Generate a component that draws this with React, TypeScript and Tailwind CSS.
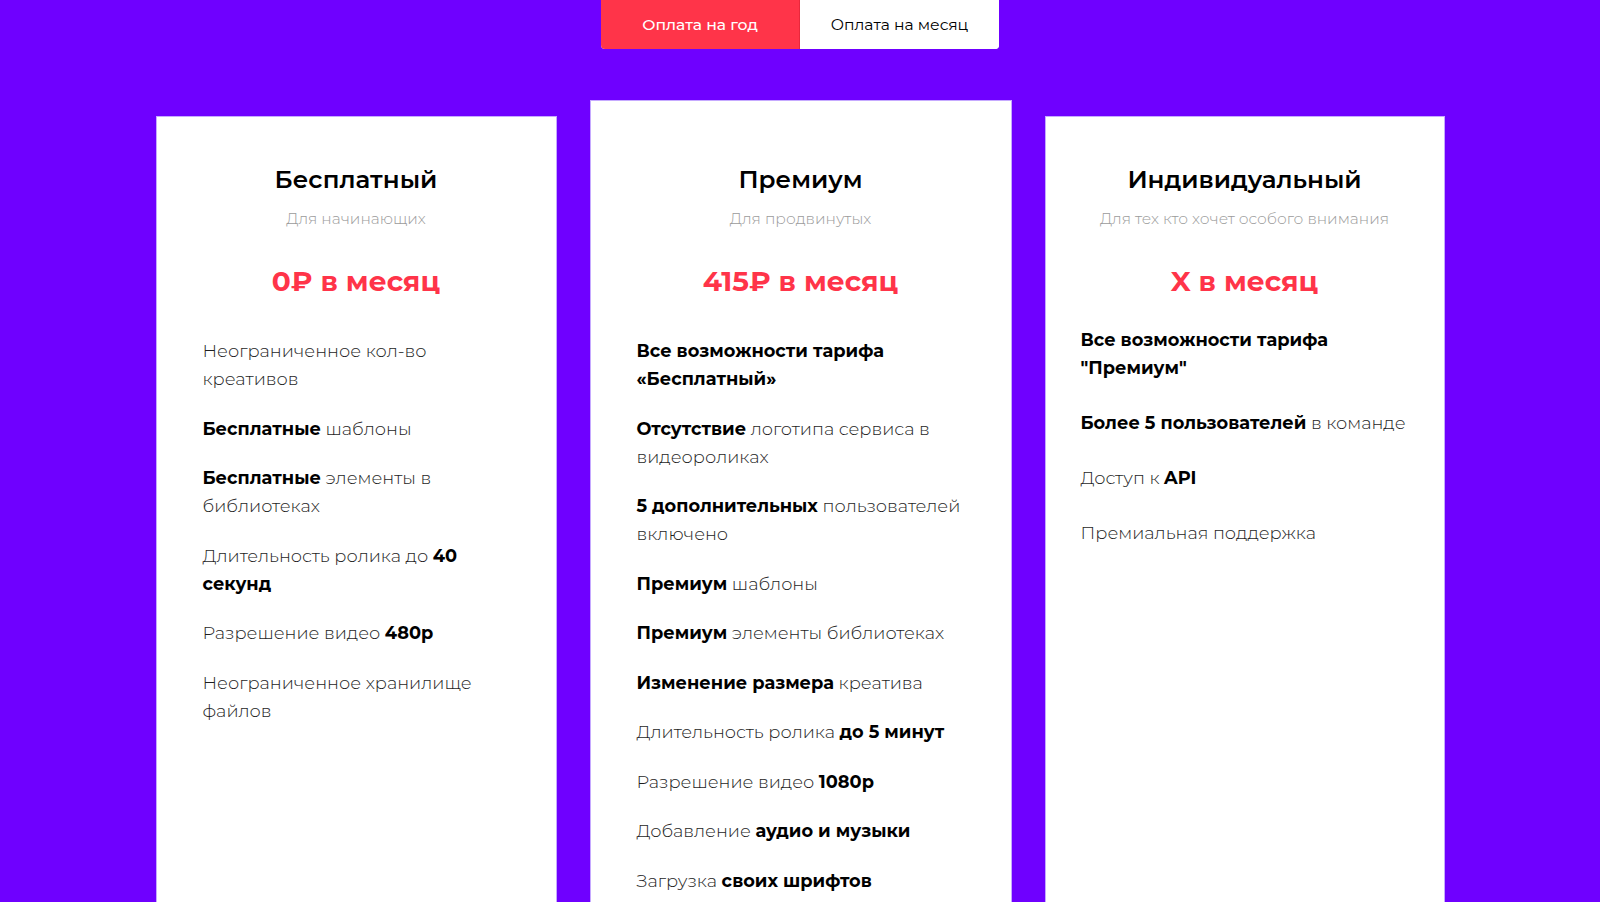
import React, { useState } from "react";

const plans = [
  {
    name: "Бесплатный",
    sub: "Для начинающих",
    price: "0₽ в месяц",
    features: [
      [{ t: "Неограниченное кол-во креативов" }],
      [{ t: "Бесплатные", b: true }, { t: " шаблоны" }],
      [{ t: "Бесплатные", b: true }, { t: " элементы в библиотеках" }],
      [{ t: "Длительность ролика до " }, { t: "40 секунд", b: true }],
      [{ t: "Разрешение видео " }, { t: "480p", b: true }],
      [{ t: "Неограниченное хранилище файлов" }],
    ],
  },
  {
    name: "Премиум",
    sub: "Для продвинутых",
    price: "415₽ в месяц",
    features: [
      [{ t: "Все возможности тарифа «Бесплатный»", b: true }],
      [{ t: "Отсутствие", b: true }, { t: " логотипа сервиса в видеороликах" }],
      [{ t: "5 дополнительных", b: true }, { t: " пользователей включено" }],
      [{ t: "Премиум", b: true }, { t: " шаблоны" }],
      [{ t: "Премиум", b: true }, { t: " элементы библиотеках" }],
      [{ t: "Изменение размера", b: true }, { t: " креатива" }],
      [{ t: "Длительность ролика " }, { t: "до 5 минут", b: true }],
      [{ t: "Разрешение видео " }, { t: "1080p", b: true }],
      [{ t: "Добавление " }, { t: "аудио и музыки", b: true }],
      [{ t: "Загрузка " }, { t: "своих шрифтов", b: true }],
    ],
  },
  {
    name: "Индивидуальный",
    sub: "Для тех кто хочет особого внимания",
    price: "X в месяц",
    features: [
      [{ t: 'Все возможности тарифа "Премиум"', b: true }],
      [{ t: "Более 5 пользователей", b: true }, { t: " в команде" }],
      [{ t: "Доступ к " }, { t: "API", b: true }],
      [{ t: "Премиальная поддержка" }],
    ],
  },
];

const cardStyles = [
  { card: "mt-4 w-[401px] pt-[46px] px-[46px]", list: "mt-[38px] gap-[21.5px]" },
  { card: "w-[422px] pt-[62px] px-[46px]", list: "mt-[38px] gap-[21.5px]" },
  { card: "mt-4 w-[400px] pt-[46px] px-[35px]", list: "mt-[27px] gap-[27px] -mr-[7px]" },
];

const App = () => {
  const [yearly, setYearly] = useState(true);

  return (
    <div
      className="h-screen overflow-hidden bg-[#6f00ff] flex flex-col items-center"
      style={{ fontFamily: '"Montserrat", "Open Sans", "Noto Sans", sans-serif' }}
    >
      {/* Toggle */}
      <div className="shrink-0 flex w-[398px] h-[49px] rounded-b-[4px] overflow-hidden bg-white">
        <button
          onClick={() => setYearly(true)}
          className={`w-1/2 h-full text-[15.6px] font-medium ${
            yearly ? "bg-[#ff3449] text-white border-r border-[#e8283c]" : "bg-white text-black"
          }`}
        >
          Оплата на год
        </button>
        <button
          onClick={() => setYearly(false)}
          className={`w-1/2 h-full text-[15.6px] ${
            !yearly ? "bg-[#ff3449] text-white font-medium" : "bg-white text-black"
          }`}
        >
          Оплата на месяц
        </button>
      </div>

      {/* Cards */}
      <div className="shrink-0 flex items-start gap-[33px] mt-[51px]">
        {plans.map((p, i) => (
          <div
            key={i}
            className={`${cardStyles[i].card} shrink-0 h-[900px] bg-white border border-[#c6aaff] flex flex-col`}
          >
            <h3 className="text-center text-[24.6px] leading-[32px] font-semibold text-black">
              {p.name}
            </h3>
            <p className="text-center mt-[14px] text-[15.5px] leading-[20px] font-light text-[#9b9b9b]">
              {p.sub}
            </p>
            <div className="text-center mt-[34px] text-[28px] leading-[36px] font-bold text-[#ff3449]">
              {p.price}
            </div>
            <ul className={`flex flex-col ${cardStyles[i].list}`}>
              {p.features.map((f, j) => (
                <li key={j} className="text-[17.8px] leading-[28px] font-light text-[#1e1e1e]">
                  {f.map((part, k) =>
                    part.b ? (
                      <b key={k} className="font-bold text-black">
                        {part.t}
                      </b>
                    ) : (
                      <span key={k}>{part.t}</span>
                    )
                  )}
                </li>
              ))}
            </ul>
          </div>
        ))}
      </div>
    </div>
  );
};

export default App;
